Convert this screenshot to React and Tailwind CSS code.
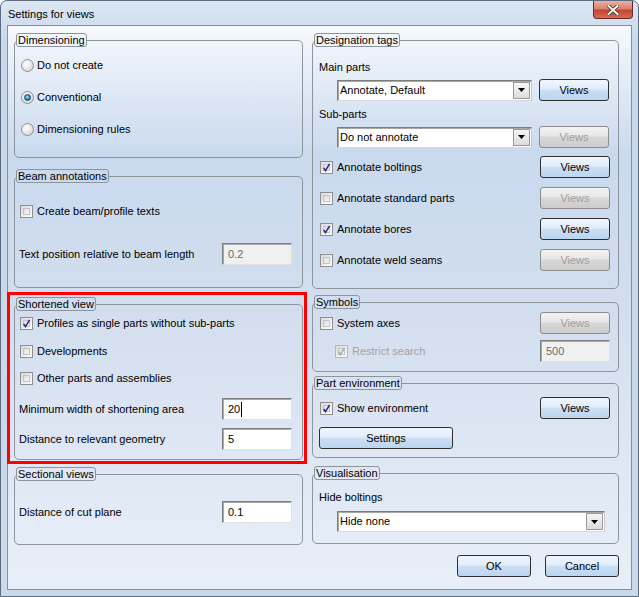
import React from "react";

const font = "font-['Liberation_Sans',Arial,sans-serif]";

function Group({ title, className = "", children }) {
  return (
    <fieldset className={`border border-[#8d949c] rounded-[5px] ${className}`}>
      <legend className="ml-[1px] border border-[#8d949c] rounded-[3px] px-[1px] h-[14px] leading-[12px] text-[11px]">
        {title}
      </legend>
      {children}
    </fieldset>
  );
}

function Radio({ checked }) {
  return (
    <span className="w-[13px] h-[13px] shrink-0 rounded-full border border-[#8f9090] bg-[radial-gradient(circle_at_40%_35%,#ffffff_0%,#eaeaea_45%,#c9c9c9_100%)] flex items-center justify-center">
      {checked && (
        <span className="w-[7px] h-[7px] rounded-full border border-[#1b4466] bg-[radial-gradient(circle_at_45%_40%,#a8ecff_0%,#2f93cf_50%,#0c3b66_100%)]" />
      )}
    </span>
  );
}

function Check({ checked, disabled }) {
  return (
    <span
      className={`relative w-[13px] h-[13px] shrink-0 border ${
        disabled ? "border-[#b7b7b7]" : "border-[#8e8f8f]"
      } bg-[linear-gradient(135deg,#d9d9d9_0%,#f4f4f4_70%,#ffffff_100%)] p-[2px] flex`}
    >
      <span className="flex-1 border border-[#c3c3c3] bg-[linear-gradient(135deg,#dedede_0%,#f7f7f7_100%)]" />
      {checked && (
        <svg className="absolute left-0 top-0" width="11" height="11" viewBox="0 0 11 11">
          <path
            d="M2.6 5.8 L4.5 8.6 L8.6 1.9"
            fill="none"
            stroke={disabled ? "#a9a9a9" : "#26268a"}
            strokeWidth="1.5"
          />
        </svg>
      )}
    </span>
  );
}

function Btn({ children, disabled, className = "" }) {
  return (
    <div
      className={`h-[22px] flex items-center justify-center rounded-[3px] border text-[11px] ${
        disabled
          ? "border-[#8c8c8c] text-[#a0a0a0] bg-[linear-gradient(180deg,#f3f3f3_0%,#e7e7e7_45%,#d7d7d7_50%,#cdcdcd_100%)]"
          : "border-[#2f2f2f] text-black bg-[linear-gradient(180deg,#f0f6fd_0%,#e1ecf9_45%,#cadef5_52%,#bdd5f1_100%)]"
      } ${className}`}
    >
      {children}
    </div>
  );
}

function Select({ value, className = "" }) {
  return (
    <div className={`h-[21px] bg-white border border-[#7d7d7d] border-r-[#c8c8c8] border-b-[#dadada] shadow-[inset_1px_1px_0_#a7a7a7] flex items-center ${className}`}>
      <span className="flex-1 pl-[2px] text-[11px]">{value}</span>
      <span className="w-[17px] h-[17px] mr-[1px] border border-[#9a9a9a] bg-[linear-gradient(180deg,#f6f6f6,#dcdcdc)] flex items-center justify-center">
        <svg width="7" height="4" viewBox="0 0 7 4">
          <path d="M0 0 H7 L3.5 4 Z" fill="#000" />
        </svg>
      </span>
    </div>
  );
}

function Field({ value, disabled, cursor }) {
  return (
    <div
      className={`w-[70px] h-[22px] shrink-0 border border-[#7d7d7d] border-r-[#e2e2e2] border-b-[#e2e2e2] shadow-[inset_1px_1px_0_#a9a9a9] flex items-center pl-[5px] text-[11px] ${
        disabled ? "bg-[#f0f0f0] text-[#6a6a6a]" : "bg-white text-black"
      }`}
    >
      {value}
      {cursor && <span className="w-px h-[15px] bg-black ml-[1px]" />}
    </div>
  );
}

function CheckRow({ label, checked, disabled, className = "", children }) {
  return (
    <div className={`h-[22px] flex items-center ${className}`}>
      <Check checked={checked} disabled={disabled} />
      <span className={`ml-[4px] flex-1 ${disabled ? "text-[#a3a3a3]" : ""}`}>{label}</span>
      {children}
    </div>
  );
}

export default function App() {
  return (
    <div className={`${font} text-[11px] text-black w-[639px] h-[597px] border border-[#5b6b80] rounded-t-[7px] bg-[linear-gradient(180deg,#dce7f3_0px,#c9d8ea_40px,#cbd9ea_100%)]`}>
      <div className="h-[24px] flex items-start">
        <span className="pl-[7px] pt-[5px] text-[11px] text-black">Settings for views</span>
        <div className="ml-auto mr-[5px] w-[40px] h-[18px] rounded-b-[4px] border border-t-0 border-[#6b2a20] bg-[linear-gradient(180deg,#eab1a2_0%,#d9826f_45%,#c54532_55%,#d56b55_100%)] flex items-center justify-center">
          <svg width="12" height="10" viewBox="0 0 12 10">
            <path d="M1.5 1 L10.5 9 M10.5 1 L1.5 9" stroke="#4a2a26" strokeWidth="3.6" strokeLinecap="square" />
            <path d="M1.5 1 L10.5 9 M10.5 1 L1.5 9" stroke="#ffffff" strokeWidth="2" strokeLinecap="square" />
          </svg>
        </div>
      </div>

      <div className="ml-[6px] w-[625px] h-[565px] border border-[#8390a2] bg-[linear-gradient(180deg,#f6f9fd_0%,#c9d9ee_23%,#d2deef_50%,#e9eff8_100%)] pl-[6px] pt-[7px] flex gap-[9px]">
        {/* left column */}
        <div className="w-[289px] flex flex-col">
          <Group title="Dimensioning" className="h-[125px]">
            <div className="pt-[2px] pl-[6px]">
              {[
                ["Do not create", false],
                ["Conventional", true],
                ["Dimensioning rules", false],
              ].map(([label, on]) => (
                <div key={label} className="h-[32px] flex items-center gap-[3px]">
                  <Radio checked={on} />
                  <span>{label}</span>
                </div>
              ))}
            </div>
          </Group>

          <Group title="Beam annotations" className="h-[119px] mt-[11px]">
            <CheckRow label="Create beam/profile texts" className="mt-[17px] pl-[5px]" />
            <div className="mt-[21px] h-[22px] flex items-center justify-between pl-[4px] pr-[10px]">
              <span>Text position relative to beam length</span>
              <Field value="0.2" disabled />
            </div>
          </Group>

          <div className="relative mt-[9px]">
            <div className="absolute -left-[7px] -right-[4px] -top-[5px] -bottom-[4px] border-[3px] border-[#ff0000] pointer-events-none" />
            <Group title="Shortened view" className="h-[163px]">
              <CheckRow label="Profiles as single parts without sub-parts" checked className="mt-[1px] pl-[5px]" />
              <CheckRow label="Developments" className="mt-[6px] pl-[5px]" />
              <CheckRow label="Other parts and assemblies" className="mt-[5px] pl-[5px]" />
              <div className="mt-[9px] h-[22px] flex items-center justify-between pl-[4px] pr-[10px]">
                <span>Minimum width of shortening area</span>
                <Field value="20" cursor />
              </div>
              <div className="mt-[8px] h-[22px] flex items-center justify-between pl-[4px] pr-[10px]">
                <span>Distance to relevant geometry</span>
                <Field value="5" />
              </div>
            </Group>
          </div>

          <Group title="Sectional views" className="h-[78px] mt-[7px]">
            <div className="mt-[20px] h-[22px] flex items-center justify-between pl-[4px] pr-[10px]">
              <span>Distance of cut plane</span>
              <Field value="0.1" />
            </div>
          </Group>
        </div>

        {/* right column */}
        <div className="w-[307px] flex flex-col">
          <Group title="Designation tags" className="h-[256px]">
            <div className="mt-[12px] h-[16px] flex items-center pl-[6px]">Main parts</div>
            <div className="mt-[4px] h-[22px] flex items-center pl-[24px] pr-[8px] gap-[7px]">
              <Select value="Annotate, Default" className="w-[195px]" />
              <Btn className="w-[70px]">Views</Btn>
            </div>
            <div className="mt-[5px] h-[16px] flex items-center pl-[6px]">Sub-parts</div>
            <div className="mt-[4px] h-[22px] flex items-center pl-[24px] pr-[8px] gap-[7px]">
              <Select value="Do not annotate" className="w-[195px]" />
              <Btn disabled className="w-[70px]">Views</Btn>
            </div>
            {[
              ["Annotate boltings", true],
              ["Annotate standard parts", false],
              ["Annotate bores", true],
              ["Annotate weld seams", false],
            ].map(([label, on], i) => (
              <CheckRow
                key={label}
                label={label}
                checked={on}
                className={`${i === 0 ? "mt-[8px]" : "mt-[9px]"} pl-[7px] pr-[8px]`}
              >
                <Btn disabled={!on} className="w-[70px]">Views</Btn>
              </CheckRow>
            ))}
          </Group>

          <Group title="Symbols" className="h-[77px] mt-[6px]">
            <CheckRow label="System axes" className="mt-[3px] pl-[7px] pr-[8px]">
              <Btn disabled className="w-[70px]">Views</Btn>
            </CheckRow>
            <CheckRow label="Restrict search" checked disabled className="mt-[6px] pl-[22px] pr-[8px]">
              <Field value="500" disabled />
            </CheckRow>
          </Group>

          <Group title="Part environment" className="h-[82px] mt-[4px]">
            <CheckRow label="Show environment" checked className="mt-[7px] pl-[7px] pr-[8px]">
              <Btn className="w-[70px]">Views</Btn>
            </CheckRow>
            <div className="mt-[8px] pl-[6px]">
              <Btn className="w-[134px]">Settings</Btn>
            </div>
          </Group>

          <Group title="Visualisation" className="h-[78px] mt-[8px]">
            <div className="mt-[9px] h-[16px] flex items-center pl-[6px]">Hide boltings</div>
            <div className="mt-[6px] pl-[24px]">
              <Select value="Hide none" className="w-[268px]" />
            </div>
          </Group>

          <div className="mt-[11px] flex justify-end gap-[14px]">
            <Btn className="w-[74px]">OK</Btn>
            <Btn className="w-[74px]">Cancel</Btn>
          </div>
        </div>
      </div>
    </div>
  );
}
